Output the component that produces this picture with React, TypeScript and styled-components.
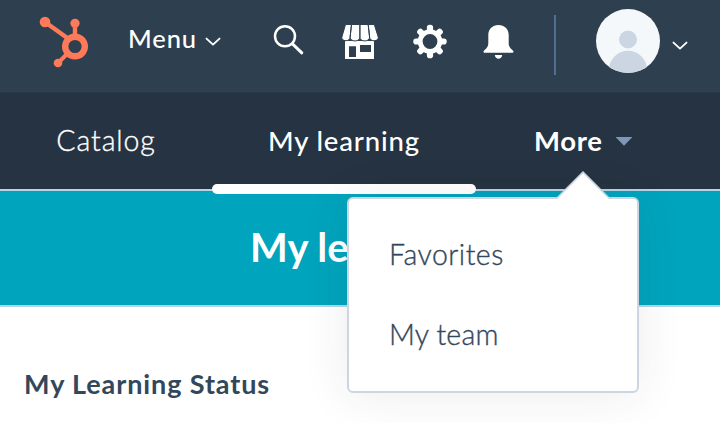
import React from "react";
import styled, { createGlobalStyle } from "styled-components";

const GlobalStyle = createGlobalStyle`
  * { box-sizing: border-box; }
  body {
    margin: 0;
    background: #fff;
    color: #33475b;
    font-family: Lato, "Open Sans", sans-serif;
    overflow: hidden;
  }
`;

const Page = styled.div`
  width: 720px;
  height: 423px;
  overflow: hidden;
`;

const TopBar = styled.header`
  display: flex;
  align-items: flex-start;
  height: 93px;
  background: #2e3f50;
  border-bottom: 1px solid #293849;
`;

const Icon = styled.svg<{ $top: number; $left: number }>`
  display: block;
  flex: none;
  margin: ${(p) => p.$top}px 0 0 ${(p) => p.$left}px;
`;

const Label = styled.span<{ $size: number; $weight: number; $spacing: number }>`
  display: block;
  font-size: ${(p) => p.$size}px;
  font-weight: ${(p) => p.$weight};
  letter-spacing: ${(p) => p.$spacing}px;
  line-height: 40px;
  white-space: nowrap;
`;

const LightLabel = styled(Label)`
  -webkit-text-stroke: 0.35px currentColor;
`;

const MenuButton = styled.div`
  display: flex;
  width: 93px;
  margin: 18px 0 0 39px;
  justify-content: space-between;
  color: #fff;
`;

const Divider = styled.div`
  width: 2px;
  height: 60px;
  margin: 15px 0 0 40px;
  background: #516f90;
`;

const Nav = styled.nav`
  display: flex;
  height: 98px;
  background: #253342;
  border-bottom: 2px solid #b4d5e6;
`;

const Tab = styled.div<{ $width: number; $top: number }>`
  position: relative;
  display: flex;
  justify-content: center;
  width: ${(p) => p.$width}px;
  padding-top: ${(p) => p.$top}px;
  color: #fff;
`;

const ActiveBar = styled.div`
  position: absolute;
  z-index: 1;
  left: 0;
  right: 0;
  bottom: -5px;
  height: 10px;
  border-radius: 5px;
  background: #fff;
`;

const MoreTab = styled.div`
  position: relative;
  display: flex;
  width: 244px;
  padding: 28px 0 0 58px;
  color: #fff;
`;

const Dropdown = styled.div`
  position: absolute;
  z-index: 2;
  left: -129px;
  top: 104px;
  width: 292px;
  height: 196px;
  padding: 35px 40px;
  border: 2px solid #cbd6e2;
  border-radius: 6px;
  background: #fff;
  box-shadow: 0 2px 48px rgba(45, 45, 45, 0.09);
  color: #33475b;
`;

const Pointer = styled.svg`
  position: absolute;
  left: 208px;
  top: -29px;
`;

const MenuItem = styled.div`
  height: 80px;
`;

const Banner = styled.section`
  height: 116px;
  padding: 36px 0 0 250px;
  background: #00a4bd;
  border-bottom: 2px solid #b4d5e2;
  color: #fff;
`;

const Content = styled.main`
  padding: 57px 24px 0;
`;

const Chevron = ({ top, left }: { top: number; left: number }) => (
  <Icon $top={top} $left={left} width="16" height="10" viewBox="0 0 16 10" fill="none">
    <path d="M1.5 1.6 8 7.6l6.5-6" stroke="#fff" strokeWidth="1.9" strokeLinecap="round" strokeLinejoin="round" />
  </Icon>
);

const Logo = () => (
  <Icon $top={14} $left={38} width="51" height="56" viewBox="38 14 51 56">
    <g stroke="#ff7a59" fill="none">
      <path d="M45 22 68 38.5M75 23v13" strokeWidth="4.4" />
      <path d="m58 63 10-10" strokeWidth="4" />
      <circle cx="75" cy="46.5" r="9.8" strokeWidth="6.4" />
    </g>
    <g fill="#ff7a59">
      <circle cx="45" cy="22" r="5.3" />
      <circle cx="75" cy="23.3" r="4.6" />
      <circle cx="58" cy="63" r="4.3" />
    </g>
  </Icon>
);

const SearchIcon = () => (
  <Icon $top={24} $left={52} width="32" height="32" viewBox="273 24 32 32" fill="none" stroke="#fff">
    <circle cx="285" cy="36.3" r="10" strokeWidth="2.5" />
    <path d="m292.5 43.8 9.3 9" strokeWidth="3" strokeLinecap="round" />
  </Icon>
);

const StoreIcon = () => (
  <Icon $top={24} $left={36} width="38" height="36" viewBox="341 24 38 36">
    <path fill="#fff" fillRule="evenodd" d="M345 41h29v18h-29zM349 46.3v10.7h7V46.3zM360 45v7h11v-7z" />
    <path
      fill="#fff"
      stroke="#2e3f50"
      strokeWidth="1"
      d="M345.5 24.5h6l-1.4 12.7c-.3 4.9-8.6 4.4-8.3.1zM351.5 24.5h8.4v12.7c0 5-9.8 5-9.8 0zM359.9 24.5h8.3l1.4 12.7c0 5-9.7 5-9.7 0zM368.2 24.5h6.1l4 12.8c.3 4.4-8.3 4.9-8.7-.1z"
    />
  </Icon>
);

const GearIcon = () => (
  <Icon $top={24} $left={33} width="36" height="36" viewBox="-18 -17.5 36 36">
    <circle r="9.8" fill="none" stroke="#fff" strokeWidth="4.8" />
    {[0, 45, 90, 135, 180, 225, 270, 315].map((angle) => (
      <rect key={angle} x="-3.1" y="-16.7" width="6.2" height="7.5" rx="2.8" fill="#fff" transform={`rotate(${angle})`} />
    ))}
  </Icon>
);

const BellIcon = () => (
  <Icon $top={24} $left={35} width="31" height="36" viewBox="483 24 31 36" fill="#fff">
    <path d="M498.5 25c6 0 10.2 4.2 10.2 10v8.2c0 3.2 1.2 4.6 4.2 7.3.9.9.7 2.3-.6 2.3h-27.6c-1.3 0-1.5-1.4-.6-2.3 3-2.7 4.2-4.1 4.2-7.3V35c0-5.8 4.2-10 10.2-10z" />
    <path d="M494.8 55h7.4c-.5 5-6.9 5-7.4 0z" />
  </Icon>
);

const Avatar = () => (
  <Icon $top={9} $left={40} width="64" height="64" viewBox="0 0 64 64">
    <defs>
      <clipPath id="avatar-circle">
        <circle cx="32" cy="32" r="32" />
      </clipPath>
    </defs>
    <circle cx="32" cy="32" r="32" fill="#f5f8fa" />
    <g fill="#cbd6e2" clipPath="url(#avatar-circle)">
      <circle cx="32" cy="30.5" r="9" />
      <circle cx="32" cy="61" r="19.2" />
    </g>
  </Icon>
);

export default function App() {
  return (
    <>
      <GlobalStyle />
      <Page>
        <TopBar>
          <Logo />
          <MenuButton>
            <Label $size={25.5} $weight={500} $spacing={0.9}>Menu</Label>
            <Chevron top={19} left={0} />
          </MenuButton>
          <SearchIcon />
          <StoreIcon />
          <GearIcon />
          <BellIcon />
          <Divider />
          <Avatar />
          <Chevron top={41} left={12} />
        </TopBar>
        <Nav>
          <Tab $width={212} $top={27}>
            <LightLabel $size={28.5} $weight={300} $spacing={0.9}>Catalog</LightLabel>
          </Tab>
          <Tab $width={264} $top={28}>
            <Label $size={27.5} $weight={500} $spacing={0.85}>My learning</Label>
            <ActiveBar />
          </Tab>
          <MoreTab>
            <Label $size={27.5} $weight={700} $spacing={0.7}>More</Label>
            <Icon $top={16} $left={12} width="18" height="9" viewBox="0 0 18 9">
              <path d="M.5 0h17L9 8.7z" fill="#7c98b6" />
            </Icon>
            <Dropdown>
              <Pointer width="54" height="31" viewBox="0 0 54 31">
                <path d="M.5 28 26 2.5 51.5 28v3H.5z" fill="#fff" />
                <path d="M0 28 26 2l26 26" fill="none" stroke="#cbd6e2" strokeWidth="1.5" />
              </Pointer>
              <MenuItem>
                <LightLabel $size={28.5} $weight={300} $spacing={0.48}>Favorites</LightLabel>
              </MenuItem>
              <MenuItem>
                <LightLabel $size={28.5} $weight={300} $spacing={0.2}>My team</LightLabel>
              </MenuItem>
            </Dropdown>
          </MoreTab>
        </Nav>
        <Banner>
          <Label $size={40} $weight={700} $spacing={0}>My learning</Label>
        </Banner>
        <Content>
          <Label $size={27} $weight={700} $spacing={0.9}>My Learning Status</Label>
        </Content>
      </Page>
    </>
  );
}
